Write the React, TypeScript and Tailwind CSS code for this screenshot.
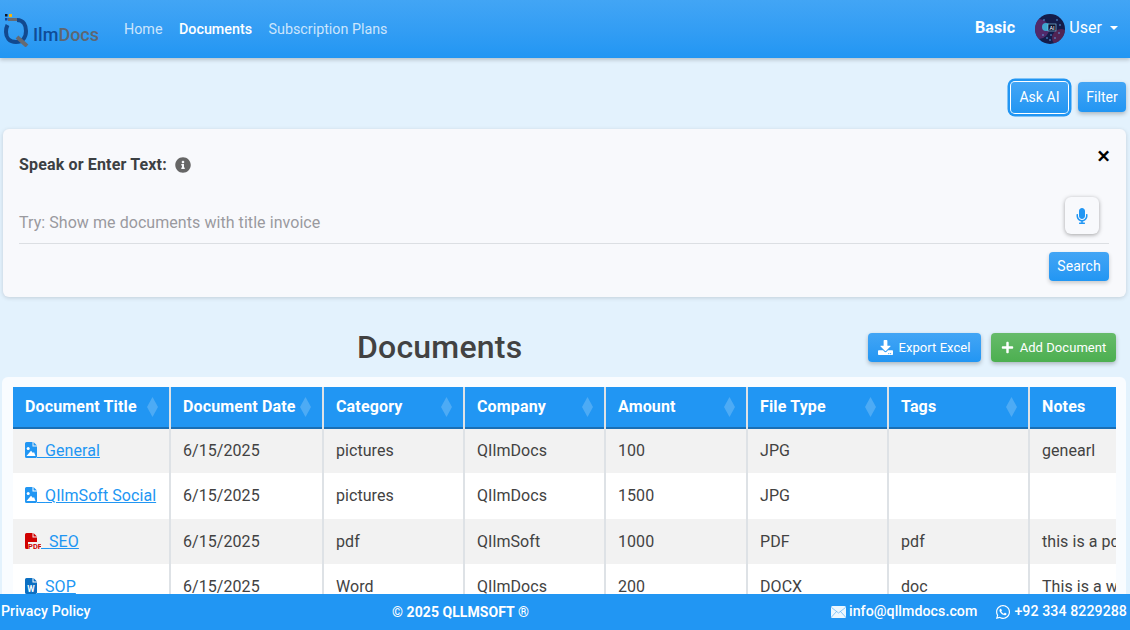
import React from "react";
import { FaDownload, FaInfoCircle, FaMicrophone, FaPlus, FaWhatsapp } from "react-icons/fa";

const columns = [
  { name: "Document Title", width: "w-[157px]" },
  { name: "Document Date", width: "w-[153px]" },
  { name: "Category", width: "w-[141px]" },
  { name: "Company", width: "w-[141px]" },
  { name: "Amount", width: "w-[142px]" },
  { name: "File Type", width: "w-[141px]" },
  { name: "Tags", width: "w-[141px]" },
  { name: "Notes", width: "w-[200px]" },
];

const rows = [
  { title: "General", kind: "image", height: "h-[45px]", date: "6/15/2025", category: "pictures", company: "QIlmDocs", amount: "100", type: "JPG", tags: "", notes: "genearl" },
  { title: "QIlmSoft Social", kind: "image", height: "h-[46px]", date: "6/15/2025", category: "pictures", company: "QIlmDocs", amount: "1500", type: "JPG", tags: "", notes: "" },
  { title: "SEO", kind: "pdf", height: "h-[45px]", date: "6/15/2025", category: "pdf", company: "QIlmSoft", amount: "1000", type: "PDF", tags: "pdf", notes: "this is a pdf document" },
  { title: "SOP", kind: "word", height: "h-[45px]", date: "6/15/2025", category: "Word", company: "QIlmDocs", amount: "200", type: "DOCX", tags: "doc", notes: "This is a word document" },
];

const Logo = () => (
  <div className="w-[100px] h-[36px] relative shrink-0">
    <svg width="36" height="36" viewBox="0 0 36 36" className="block">
      <rect x="5" y="3" width="2.5" height="2.5" fill="#111827" />
      <rect x="9" y="3" width="3" height="3" fill="#f5b50c" />
      <rect x="5" y="7" width="2.5" height="2.5" fill="#0d47a1" />
      <rect x="8" y="7" width="9" height="3" fill="#666a73" />
      <path d="M17 9 C24 9 26 15 26 20 C26 27 22 31 16 31 C9 31 6 26 6 21 C6 18 6.5 16 7.5 14" fill="none" stroke="#12498f" strokeWidth="4" />
      <path d="M17 26 L27 35" stroke="#666a73" strokeWidth="4" />
    </svg>
    <span className="absolute left-[33px] top-[12px] text-[18px] leading-[24px] font-medium tracking-normal text-[#0f4c97]">
      Ilm<span className="text-[#5f6670]">Docs</span>
    </span>
  </div>
);

const Avatar = () => (
  <svg width="30" height="30" viewBox="0 0 30 30" className="rounded-full shrink-0">
    <rect width="30" height="30" fill="#141c4a" />
    <circle cx="4" cy="15" r="10" fill="#6b2f78" opacity="0.7" />
    <circle cx="26" cy="24" r="9" fill="#7a2a5a" opacity="0.6" />
    <circle cx="11" cy="13" r="4" fill="#39c6e8" opacity="0.8" />
    <rect x="13" y="10" width="8" height="7" fill="#0b1230" stroke="#8fd8f5" strokeWidth="0.6" />
    <text x="17" y="15.6" fontSize="5.5" fill="#ffffff" textAnchor="middle" fontFamily="Roboto, sans-serif">AI</text>
    <g fill="#5fa8ee">
      <circle cx="8" cy="21" r="0.8" />
      <circle cx="12" cy="24" r="0.8" />
      <circle cx="16" cy="21" r="0.8" />
      <circle cx="20" cy="24" r="0.8" />
      <circle cx="24" cy="19" r="0.8" />
      <circle cx="15" cy="26" r="0.8" />
      <circle cx="22" cy="6" r="0.8" />
      <circle cx="25" cy="11" r="0.8" />
      <circle cx="9" cy="6" r="0.8" />
    </g>
  </svg>
);

const SortIcon = () => (
  <svg width="11" height="20" viewBox="0 0 11 20" className="shrink-0">
    <path d="M5.5 0 L11 10 L5.5 20 L0 10 Z" fill="#ffffff" opacity="0.2" />
  </svg>
);

const docPath = "M1.5 0 H7.5 V4.5 H12 V14.5 A1.5 1.5 0 0 1 10.5 16 H1.5 A1.5 1.5 0 0 1 0 14.5 V1.5 A1.5 1.5 0 0 1 1.5 0 Z M8.5 0 L12 3.5 H8.5 Z";

const FileIcon = ({ kind }: { kind: string }) => {
  if (kind === "pdf") {
    return (
      <svg width="16" height="17" viewBox="0 0 16 17" className="inline align-[-3px]">
        <path d={docPath} fill="#d00000" />
        <rect x="3" y="9" width="13" height="8" fill="#f2f2f2" />
        <text x="3" y="16" fontSize="7.5" fontWeight="700" fill="#d00000" fontFamily="Roboto, sans-serif">PDF</text>
      </svg>
    );
  }
  if (kind === "word") {
    return (
      <svg width="12" height="16" viewBox="0 0 12 16" className="inline align-[-2px]">
        <path d={docPath} fill="#0b6fc2" />
        <text x="6" y="13.5" fontSize="8.5" fontWeight="700" fill="#ffffff" textAnchor="middle" fontFamily="Roboto, sans-serif">W</text>
      </svg>
    );
  }
  return (
    <svg width="12" height="16" viewBox="0 0 12 16" className="inline align-[-2px]">
      <path d={docPath} fill="#2196f3" />
      <circle cx="3.2" cy="6.5" r="1.5" fill="#ffffff" />
      <path d="M1.5 14 L6 8.8 L8 11 L9 10 L10.5 14 Z" fill="#ffffff" />
    </svg>
  );
};

const EnvelopeIcon = () => (
  <svg width="15" height="12" viewBox="0 0 15 12" className="shrink-0">
    <rect width="15" height="12" rx="1.5" fill="#ffffff" fillOpacity="0.92" />
    <path d="M0.5 1.5 L7.5 7 L14.5 1.5 M0.5 11 L5.5 5.5 M14.5 11 L9.5 5.5" fill="none" stroke="#2196f3" strokeWidth="0.7" opacity="0.7" />
  </svg>
);

const App = () => {
  return (
    <div className="h-[630px] overflow-hidden bg-[#e3f2fd] font-['Roboto',sans-serif] text-[#424242] tracking-[0.06px]">
      {/* Header */}
      <header className="flex items-center justify-between h-[58px] pr-[12px] bg-gradient-to-b from-[#42a5f5] to-[#2196f3] shadow-[0_2px_4px_rgba(0,0,0,0.2)]">
        <div className="flex items-center">
          <Logo />
          <nav className="flex items-center gap-[16.5px] ml-[24px] mt-[2px] text-[14.3px] tracking-normal">
            <a className="text-white/75">Home</a>
            <a className="text-white font-medium">Documents</a>
            <a className="text-white/75">Subscription Plans</a>
          </nav>
        </div>
        <div className="flex items-center text-white">
          <span className="font-bold text-[16px] mr-[20px] mt-[-2px] tracking-[0.15px]">Basic</span>
          <Avatar />
          <span className="ml-[4px] text-[16px] mt-[-3px]">User</span>
          <span className="ml-[8px] mt-[-2px] w-0 h-0 border-x-[4.5px] border-x-transparent border-t-[4.5px] border-t-white" />
        </div>
      </header>

      {/* Actions */}
      <div className="flex justify-end items-center gap-[10px] h-[30px] mt-[24px] pr-[4px]">
        <button className="h-[31px] w-[57px] rounded-[4px] text-[14px] text-white bg-gradient-to-b from-[#42a5f5] to-[#2196f3] shadow-[0_0_0_1px_#ffffff,0_0_0_3.5px_#2196f3]">
          Ask AI
        </button>
        <button className="h-[30px] w-[48px] rounded-[4px] text-[14px] text-white bg-gradient-to-b from-[#42a5f5] to-[#2196f3] shadow-[0_2px_4px_rgba(0,0,0,0.25)]">
          Filter
        </button>
      </div>

      {/* Speech search */}
      <section className="mt-[17px] mr-[4px] ml-[3px] h-[168px] rounded-[6px] bg-[#f8f9fc] shadow-[0_1px_4px_rgba(0,0,0,0.15)] pl-[16px] pr-[17px] pt-[25px]">
        <div className="flex items-center justify-between">
          <div className="flex items-center gap-[8px]">
            <span className="mt-[1px] font-bold text-[16px] leading-[20px] text-[#3c4043] tracking-[0.15px]">Speak or Enter Text:</span>
            <FaInfoCircle className="text-[#666] text-[16px]" />
          </div>
          <span className="mr-[-1px] mt-[-18px] text-[24px] leading-[20px] text-black font-medium">×</span>
        </div>
        <div className="flex items-start justify-between h-[52px] mt-[17px] border-b border-[#dcdfe3]">
          <span className="mt-[19px] text-[16px] text-[#9a9a9f]">Try: Show me documents with title invoice</span>
          <button className="flex items-center justify-center w-[34px] h-[37px] mr-[10px] mt-[5px] rounded-[6px] bg-[#f8f9fc] shadow-[0_1px_4px_rgba(0,0,0,0.35)]">
            <FaMicrophone className="text-[#2196f3] text-[16px]" />
          </button>
        </div>
        <div className="flex justify-end mt-[8px]">
          <button className="w-[60px] h-[29px] rounded-[4px] text-[14px] text-white bg-gradient-to-b from-[#42a5f5] to-[#2196f3] shadow-[0_2px_4px_rgba(0,0,0,0.2)]">
            Search
          </button>
        </div>
      </section>

      {/* Title row */}
      <div className="flex items-center justify-between h-[30px] mt-[35px] pl-[357px] pr-[14px]">
        <h1 className="text-[32px] font-medium text-[#424242] tracking-[0.2px]">Documents</h1>
        <div className="flex items-center gap-[10px]">
          <button className="flex items-center justify-center gap-[5px] w-[113px] h-[29px] pt-[1px] rounded-[4px] text-[13px] text-white bg-gradient-to-b from-[#42a5f5] to-[#2196f3] shadow-[0_2px_4px_rgba(0,0,0,0.25)]">
            <FaDownload className="text-[15px] mt-[-1px]" />
            Export Excel
          </button>
          <button className="flex items-center justify-center gap-[6px] w-[125px] h-[29px] pt-[1px] rounded-[4px] text-[13px] text-white bg-gradient-to-b from-[#66bb6a] to-[#4caf50] shadow-[0_2px_4px_rgba(0,0,0,0.25)]">
            <FaPlus className="text-[13px] mt-[-1px]" />
            Add Document
          </button>
        </div>
      </div>

      {/* Table card */}
      <div className="mt-[15px] ml-[2px] mr-[4px] h-[300px] rounded-[6px] bg-[#f9fcff] pt-[10px] pl-[11px] pr-[10px]">
        <div className="overflow-hidden">
          <table className="table-fixed w-[1216px] border-collapse text-[16px]">
            <thead>
              <tr className="bg-[#2196f3] text-white h-[41px] border-b-2 border-[#1a6fb5]">
                {columns.map((col, i) => (
                  <th key={col.name} className={`${col.width} px-[12px] text-left font-bold tracking-[0.15px] border-r-2 border-[#dee2e6]`}>
                    <div className="flex items-center justify-between">
                      <span className="whitespace-nowrap">{col.name}</span>
                      {i < 7 && <span className="mr-[-1px]"><SortIcon /></span>}
                    </div>
                  </th>
                ))}
              </tr>
            </thead>
            <tbody>
              {rows.map((row, i) => (
                <tr key={row.title} className={`${row.height} ${i % 2 === 0 ? "bg-[#f2f2f2]" : "bg-white"}`}>
                  <td className="px-[12px] border-r-2 border-[#dee2e6] whitespace-nowrap overflow-hidden">
                    <a className="text-[#2196f3] underline">
                      <FileIcon kind={row.kind} />
                      {"\u00a0 "}
                      {row.title}
                    </a>
                  </td>
                  <td className="px-[12px] border-r-2 border-[#dee2e6]">{row.date}</td>
                  <td className="px-[12px] border-r-2 border-[#dee2e6]">{row.category}</td>
                  <td className="px-[12px] border-r-2 border-[#dee2e6]">{row.company}</td>
                  <td className="px-[12px] border-r-2 border-[#dee2e6]">{row.amount}</td>
                  <td className="px-[12px] border-r-2 border-[#dee2e6]">{row.type}</td>
                  <td className="px-[12px] border-r-2 border-[#dee2e6]">{row.tags}</td>
                  <td className="px-[12px] whitespace-nowrap overflow-hidden">{row.notes}</td>
                </tr>
              ))}
            </tbody>
          </table>
        </div>
      </div>

      {/* Footer */}
      <footer className="fixed bottom-0 left-0 right-0 h-[36px] flex items-center pl-[1px] pr-[3px] bg-[#2196f3] text-white text-[14.2px] font-medium">
        <span className="w-[391px]">Privacy Policy</span>
        <span className="font-bold text-[14px]">© 2025 QLLMSOFT ®</span>
        <div className="flex items-center ml-auto gap-[18px]">
          <span className="flex items-center gap-[3px]">
            <EnvelopeIcon />
            info@qllmdocs.com
          </span>
          <span className="flex items-center gap-[3px]">
            <FaWhatsapp className="text-[16px]" />
            +92 334 8229288
          </span>
        </div>
      </footer>
    </div>
  );
};

export default App;
